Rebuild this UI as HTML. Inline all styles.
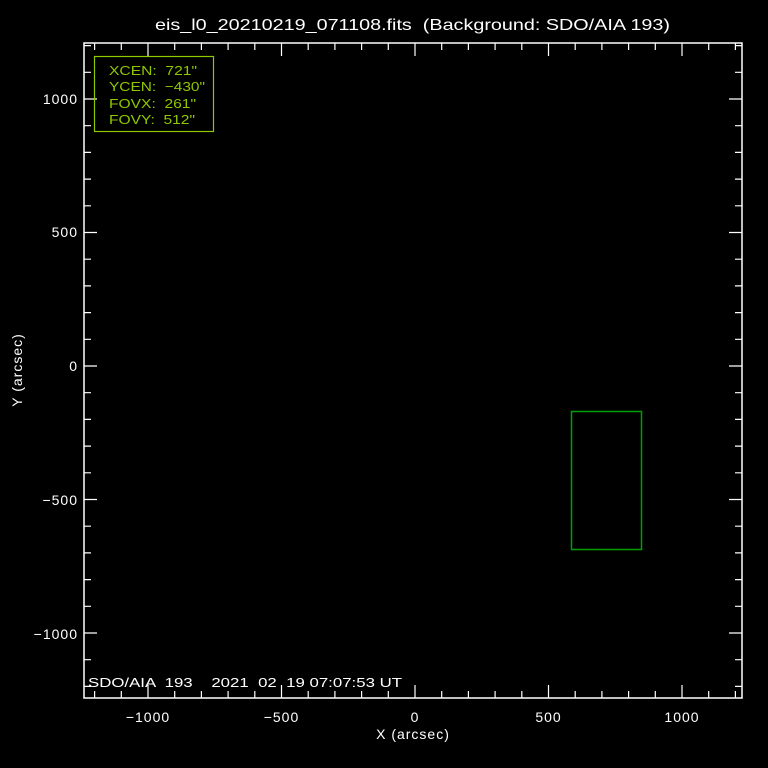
<!DOCTYPE html>
<html><head><style>
html,body{margin:0;padding:0;background:#000;width:768px;height:768px;overflow:hidden}
svg text{font-family:"Liberation Sans",sans-serif;fill:#fff;white-space:pre}
</style></head><body>
<svg width="768" height="768" viewBox="0 0 768 768" xmlns="http://www.w3.org/2000/svg" xml:space="preserve">
<rect width="768" height="768" fill="#000"/>
<text x="155" y="30" font-size="16" textLength="515" lengthAdjust="spacingAndGlyphs">eis_l0_20210219_071108.fits  (Background: SDO/AIA 193)</text>
<rect x="84" y="43" width="658" height="655" fill="none" stroke="#fff" stroke-width="1.5"/>
<g stroke="#fff" stroke-width="1.2">
<path d="M94.6 698v-7M121.3 698v-7M148 698v-13M174.7 698v-7M201.4 698v-7M228.1 698v-7M254.8 698v-7M281.5 698v-13M308.2 698v-7M334.9 698v-7M361.6 698v-7M388.3 698v-7M415 698v-13M441.7 698v-7M468.4 698v-7M495.1 698v-7M521.8 698v-7M548.5 698v-13M575.2 698v-7M601.9 698v-7M628.6 698v-7M655.3 698v-7M682 698v-13M708.7 698v-7M735.4 698v-7"/>
<path d="M94.6 43v7M121.3 43v7M148 43v13M174.7 43v7M201.4 43v7M228.1 43v7M254.8 43v7M281.5 43v13M308.2 43v7M334.9 43v7M361.6 43v7M388.3 43v7M415 43v13M441.7 43v7M468.4 43v7M495.1 43v7M521.8 43v7M548.5 43v13M575.2 43v7M601.9 43v7M628.6 43v7M655.3 43v7M682 43v13M708.7 43v7M735.4 43v7"/>
<path d="M84 45.6h7M84 72.3h7M84 99h13M84 125.7h7M84 152.4h7M84 179.1h7M84 205.8h7M84 232.5h13M84 259.2h7M84 285.9h7M84 312.6h7M84 339.3h7M84 366h13M84 392.7h7M84 419.4h7M84 446.1h7M84 472.8h7M84 499.5h13M84 526.2h7M84 552.9h7M84 579.6h7M84 606.3h7M84 633h13M84 659.7h7M84 686.4h7"/>
<path d="M742 45.6h-7M742 72.3h-7M742 99h-13M742 125.7h-7M742 152.4h-7M742 179.1h-7M742 205.8h-7M742 232.5h-13M742 259.2h-7M742 285.9h-7M742 312.6h-7M742 339.3h-7M742 366h-13M742 392.7h-7M742 419.4h-7M742 446.1h-7M742 472.8h-7M742 499.5h-13M742 526.2h-7M742 552.9h-7M742 579.6h-7M742 606.3h-7M742 633h-13M742 659.7h-7M742 686.4h-7"/>
</g>
<g font-size="14" text-anchor="middle" letter-spacing="1">
<text x="148" y="722">−1000</text><text x="281.5" y="722">−500</text><text x="415" y="722">0</text><text x="548.5" y="722">500</text><text x="682" y="722">1000</text>
<text x="413" y="739">X (arcsec)</text>
</g>
<g font-size="14" text-anchor="end" letter-spacing="1">
<text x="78" y="104">1000</text><text x="78" y="237">500</text><text x="78" y="371">0</text><text x="78" y="505">−500</text><text x="78" y="639">−1000</text>
</g>
<text transform="translate(22,370) rotate(-90)" font-size="14" text-anchor="middle" letter-spacing="1">Y (arcsec)</text>
<text x="88" y="687" font-size="13" textLength="314" lengthAdjust="spacingAndGlyphs">SDO/AIA  193    2021  02  19 07:07:53 UT</text>
<rect x="94.5" y="56.5" width="119" height="75" fill="none" stroke="#8fc800" stroke-width="1.2"/>
<g font-size="13">
<text x="109" y="75" style="fill:#8fc800" textLength="88" lengthAdjust="spacingAndGlyphs">XCEN:  721"</text>
<text x="109" y="91" style="fill:#8fc800" textLength="96" lengthAdjust="spacingAndGlyphs">YCEN:  −430"</text>
<text x="109" y="108" style="fill:#8fc800" textLength="87" lengthAdjust="spacingAndGlyphs">FOVX:  261"</text>
<text x="109" y="124" style="fill:#8fc800" textLength="86" lengthAdjust="spacingAndGlyphs">FOVY:  512"</text>
</g>
<rect x="571.5" y="411.5" width="70" height="138" fill="none" stroke="#00a000" stroke-width="1.5"/>
</svg>
</body></html>
